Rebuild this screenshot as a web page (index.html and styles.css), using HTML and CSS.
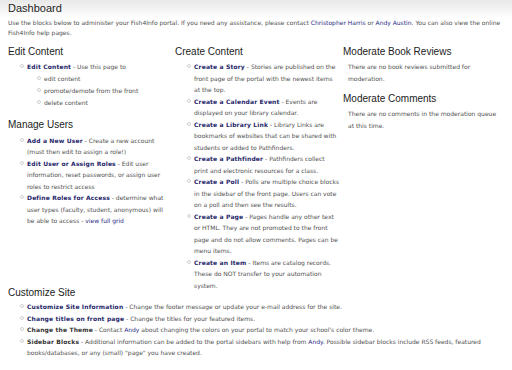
FILE: index.html
```html
<!DOCTYPE html>
<html>
<head>
<meta charset="utf-8">
<link rel="stylesheet" href="styles.css">
</head>
<body>
<div class="header"><h1 class="title">Dashboard</h1></div>
<p class="intro">Use the blocks below to administer your Fish4Info portal. If you need any assistance, please contact <a class="name" href="#">Christopher Harris</a> or <a class="name" href="#">Andy Austin</a>. You can also view the online Fish4Info help pages.</p>

<div class="columns">
  <div class="col">
    <h2 class="block-title">Edit Content</h2>
    <ul class="list">
      <li><a class="lk" href="#">Edit Content</a> - Use this page to
        <ul class="sub">
          <li>edit content</li>
          <li>promote/demote from the front</li>
          <li>delete content</li>
        </ul>
      </li>
    </ul>
    <h2 class="block-title next">Manage Users</h2>
    <ul class="list users">
      <li><a class="lk" href="#">Add a New User</a> - Create a new account (must then edit to assign a role!)</li>
      <li><a class="lk" href="#">Edit User or Assign Roles</a> - Edit user information, reset passwords, or assign user roles to restrict access</li>
      <li><a class="lk" href="#">Define Roles for Access</a> - determine what user types (faculty, student, anonymous) will be able to access - <a class="name" href="#">view full grid</a></li>
    </ul>
  </div>
  <div class="col mid">
    <h2 class="block-title">Create Content</h2>
    <ul class="list">
      <li><a class="lk" href="#">Create a Story</a> - Stories are published on the front page of the portal with the newest items at the top.</li>
      <li><a class="lk" href="#">Create a Calendar Event</a> - Events are displayed on your library calendar.</li>
      <li><a class="lk" href="#">Create a Library Link</a> - Library Links are bookmarks of websites that can be shared with students or added to Pathfinders.</li>
      <li><a class="lk" href="#">Create a Pathfinder</a> - Pathfinders collect print and electronic resources for a class.</li>
      <li><a class="lk" href="#">Create a Poll</a> - Polls are multiple choice blocks in the sidebar of the front page. Users can vote on a poll and then see the results.</li>
      <li><a class="lk" href="#">Create a Page</a> - Pages handle any other text or HTML. They are not promoted to the front page and do not allow comments. Pages can be menu items.</li>
      <li><a class="lk" href="#">Create an Item</a> - Items are catalog records. These do NOT transfer to your automation system.</li>
    </ul>
  </div>
  <div class="col">
    <h2 class="block-title">Moderate Book Reviews</h2>
    <p class="note">There are no book reviews submitted for moderation.</p>
    <h2 class="block-title next2">Moderate Comments</h2>
    <p class="note">There are no comments in the moderation queue at this time.</p>
  </div>
</div>

<div class="customize">
  <h2 class="block-title">Customize Site</h2>
  <ul class="list">
    <li><a class="lk" href="#">Customize Site Information</a> - Change the footer message or update your e-mail address for the site.</li>
    <li><a class="lk" href="#">Change titles on front page</a> - Change the titles for your featured items.</li>
    <li><span class="lk plain">Change the Theme</span> - Contact <a class="name" href="#">Andy</a> about changing the colors on your portal to match your school's color theme.</li>
    <li><span class="lk plain">Sidebar Blocks</span> - Additional information can be added to the portal sidebars with help from <a class="name" href="#">Andy</a>. Possible sidebar blocks include RSS feeds, featured books/databases, or any (small) "page" you have created.</li>
  </ul>
</div>
</body>
</html>
```
FILE: styles.css
```css
html, body {
  margin: 0;
  padding: 0;
  background: #fff;
}
body {
  font-family: "DejaVu Sans", Verdana, sans-serif;
  font-size: 6px;
  color: #505050;
}
a { text-decoration: none; }
.header {
  height: 18px;
  padding-left: 8px;
  background: linear-gradient(#e9e9e9, #f5f5f5 60%, #fff);
}
.title {
  margin: 0;
  font-family: "Liberation Sans", Arial, sans-serif;
  font-weight: normal;
  font-size: 11px;
  line-height: 17px;
  color: #1e1e1e;
}
.intro {
  margin: 0 8px;
  line-height: 10px;
}
.name { color: #2b2b86; }
.columns {
  display: grid;
  grid-template-columns: 167px 168px 1fr;
  margin: 7px 8px 0 8px;
}
.col { padding-right: 5px; }
.col.mid { padding-right: 3px; }
.block-title {
  margin: 0;
  font-family: "Liberation Sans", Arial, sans-serif;
  font-weight: normal;
  font-size: 10px;
  line-height: 14px;
  color: #222;
}
.block-title.next { margin-top: 9px; }
.block-title.next2 { margin-top: 7px; }
.list {
  list-style: none;
  margin: 2px 0 0 0;
  padding: 0 0 0 19px;
  line-height: 11.5px;
}
.list.users { margin-top: 3px; }
.list li { position: relative; }
.list li::before {
  content: "";
  position: absolute;
  left: -7px;
  top: 3px;
  width: 2px;
  height: 2px;
  border: 1px solid #d0d0d0;
  border-radius: 50%;
}
.sub {
  list-style: none;
  margin: 0;
  padding: 0 0 0 17px;
}
.sub li { margin-top: 0.5px; }
.lk {
  color: #1f1f6a;
  font-weight: bold;
  letter-spacing: 0.15px;
}
.lk.plain { color: #333; }
.note {
  margin: 2px 0 0 5px;
  line-height: 12px;
}
.customize {
  margin: -5px 8px 0 8px;
}
.customize .list { margin-top: 1px; }
```
